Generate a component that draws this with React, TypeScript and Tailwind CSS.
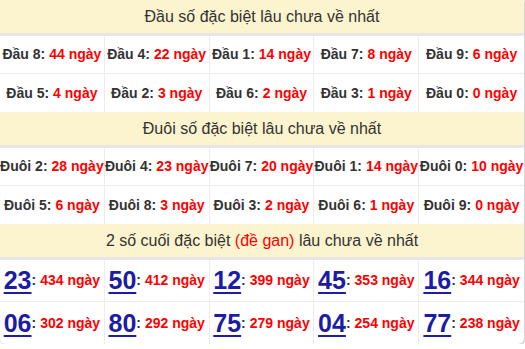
import React from "react";

const dau = [
  ["8", "44"], ["4", "22"], ["1", "14"], ["7", "8"], ["9", "6"],
  ["5", "4"], ["2", "3"], ["6", "2"], ["3", "1"], ["0", "0"],
];
const duoi = [
  ["2", "28"], ["4", "23"], ["7", "20"], ["1", "14"], ["0", "10"],
  ["5", "6"], ["8", "3"], ["3", "2"], ["6", "1"], ["9", "0"],
];
const gan = [
  ["23", "434"], ["50", "412"], ["12", "399"], ["45", "353"], ["16", "344"],
  ["06", "302"], ["80", "292"], ["75", "279"], ["04", "254"], ["77", "238"],
];

function Header({ children }: { children: React.ReactNode }) {
  return (
    <div className="h-[36px] flex items-center justify-center bg-[#fcf3cf] border-b-[3px] border-[#e6e6e6] text-[16px] text-[#333]">
      {children}
    </div>
  );
}

function Grid({ items, label }: { items: string[][]; label: string }) {
  return (
    <div className="grid grid-cols-5">
      {items.map(([k, v], i) => (
        <div
          key={i}
          className={`h-[38px] flex items-center justify-center whitespace-nowrap text-[14px] font-bold text-[#333] border-[#ececec] ${i % 5 !== 4 ? "border-r" : ""} ${i < 5 ? "border-b" : ""}`}
        >
          {label} {k}:<span className="text-[#ff0000] ml-[4px]">{v} ngày</span>
        </div>
      ))}
    </div>
  );
}

export default function App() {
  return (
    <div className="w-[524px] bg-white font-['Liberation_Sans',Arial,sans-serif] rounded-b-[6px] shadow-[1px_1px_3px_rgba(0,0,0,0.25)] overflow-hidden">
      <Header>Đầu số đặc biệt lâu chưa về nhất</Header>
      <Grid items={dau} label="Đầu" />
      <Header>Đuôi số đặc biệt lâu chưa về nhất</Header>
      <Grid items={duoi} label="Đuôi" />
      <Header>
        2 số cuối đặc biệt&nbsp;<span className="text-[#ff0000]">(đề gan)</span>&nbsp;lâu chưa về nhất
      </Header>
      <div className="grid grid-cols-5">
        {gan.map(([k, v], i) => (
          <div
            key={i}
            className={`h-[42px] flex items-center justify-center whitespace-nowrap border-[#ececec] ${i % 5 !== 4 ? "border-r" : ""} ${i < 5 ? "border-b" : ""}`}
          >
            <span className="text-[25px] font-bold text-[#1c1ca4] underline underline-offset-[3px] leading-none">{k}</span>
            <span className="text-[14px] font-bold text-[#333]">:</span>
            <span className="text-[14px] font-bold text-[#ff0000] ml-[4px]">{v} ngày</span>
          </div>
        ))}
      </div>
    </div>
  );
}
